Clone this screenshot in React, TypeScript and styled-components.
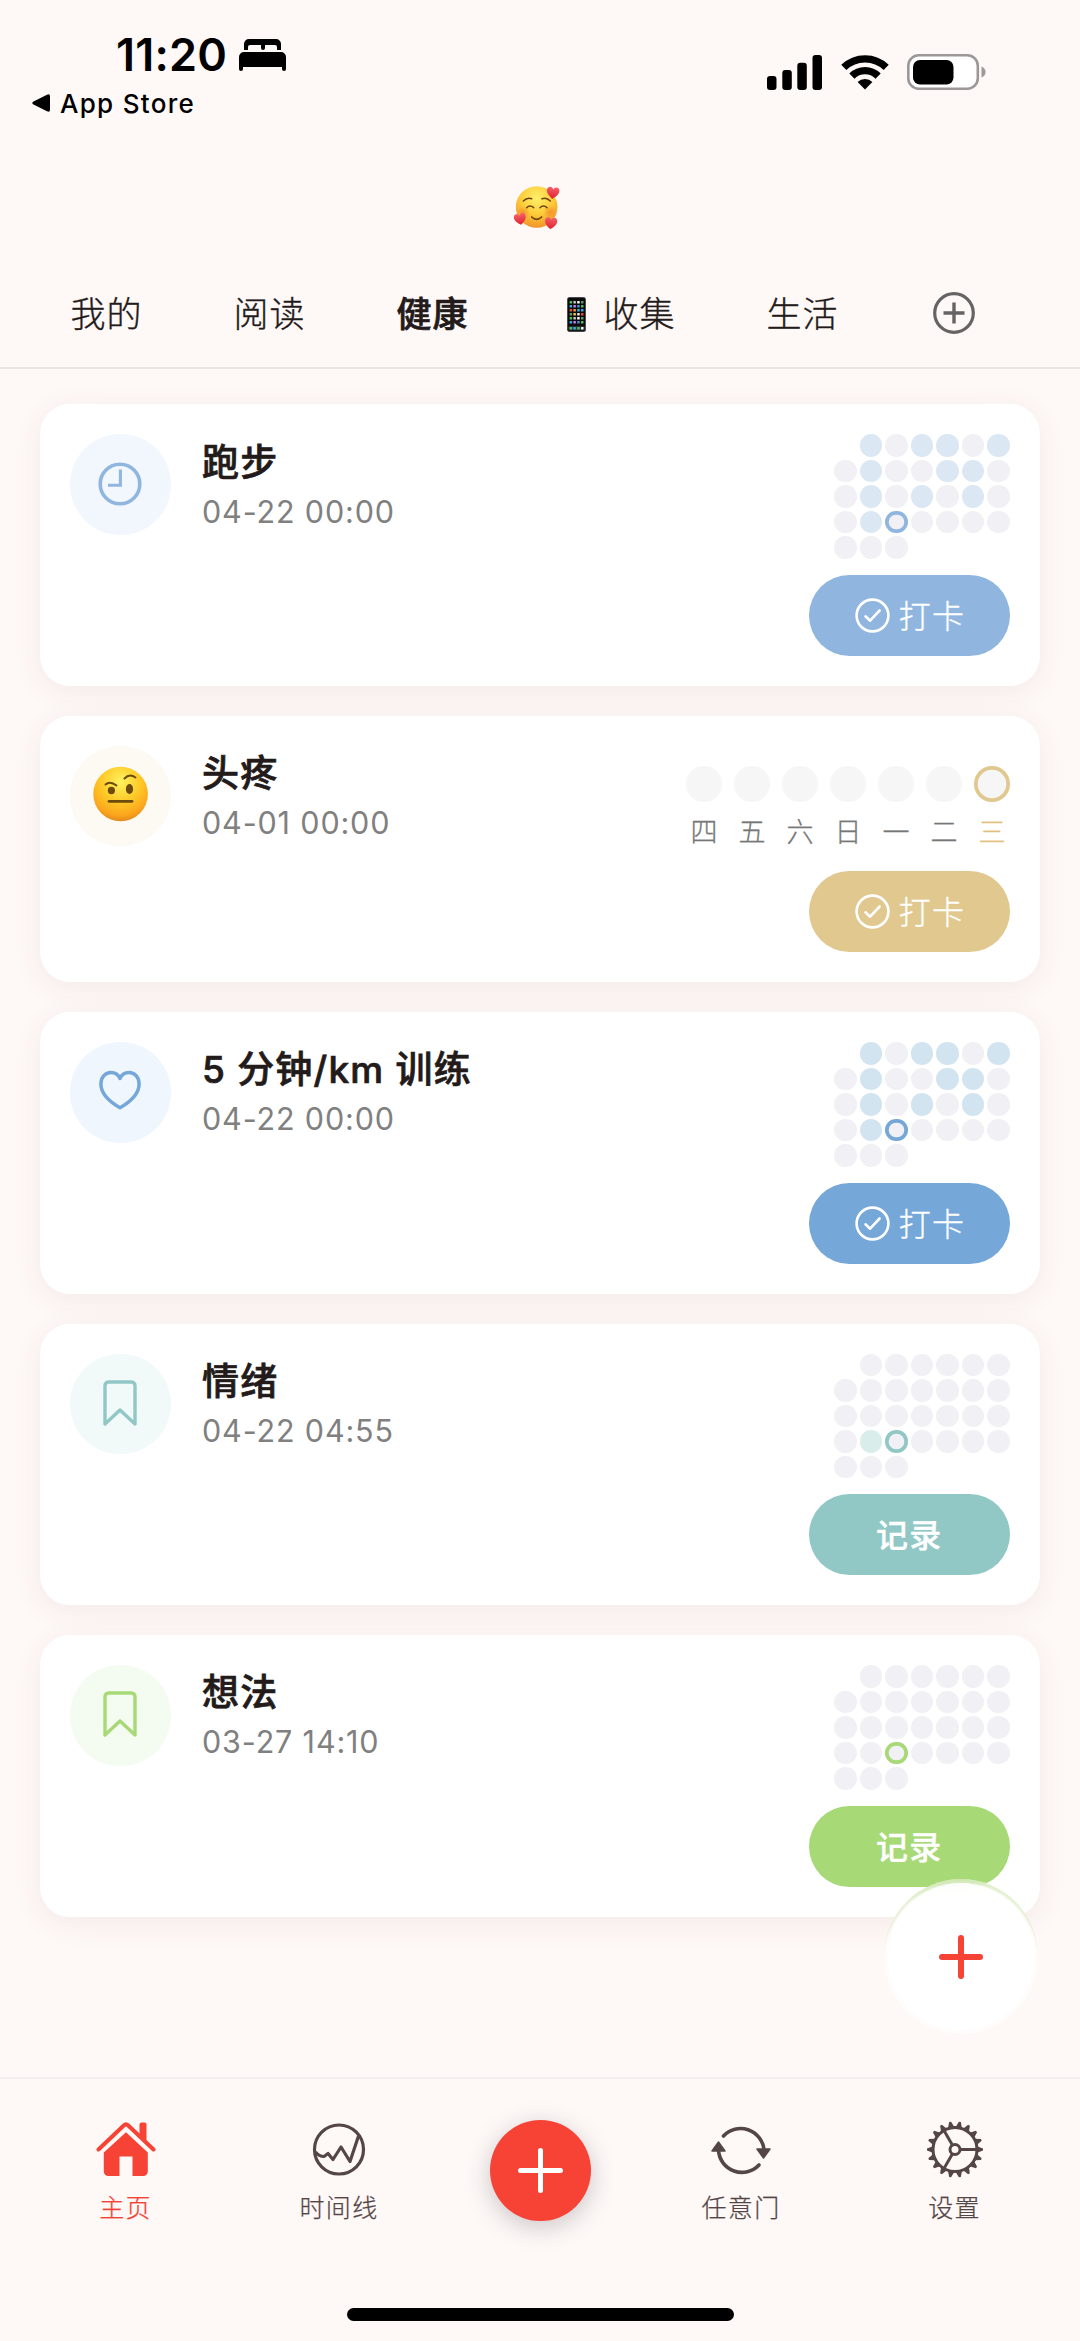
import React from "react";
import styled, { createGlobalStyle } from "styled-components";

const GlobalStyle = createGlobalStyle`
  * { box-sizing: border-box; }
  body { margin: 0; background: #fef8f7; }
  svg { display: block; flex: none; }
`;

const latin = `Inter, "Noto Sans CJK SC", sans-serif`;
const han = `"Noto Sans CJK SC", Inter, sans-serif`;

const Screen = styled.div`
  width: 1080px;
  height: 2341px;
  display: flex;
  flex-direction: column;
  background: #fef8f7;
  color: #231a1a;
  font-family: ${han};
  overflow: hidden;
`;

/* ---------- status bar ---------- */

const StatusBar = styled.div`
  height: 130px;
  flex: none;
  display: flex;
  justify-content: space-between;
  padding: 30px 93px 0 32px;
  color: #000;
  font-family: ${latin};
`;

const StatusLeft = styled.div`
  display: flex;
  flex-direction: column;
`;

const Clock = styled.div`
  display: flex;
  align-items: center;
  gap: 12px;
  height: 49px;
  padding-left: 84px;
  font-size: 45px;
  font-weight: 600;
  line-height: 49px;
  letter-spacing: 0.2px;
`;

const BackLink = styled.div`
  display: flex;
  align-items: center;
  gap: 10px;
  height: 48px;
  font-size: 26px;
  font-weight: 500;
  letter-spacing: 1.3px;
`;

const StatusRight = styled.div`
  display: flex;
  align-items: center;
  height: 40px;
  margin-top: 22px;
  gap: 18px;
`;

/* ---------- header and tabs ---------- */

const Header = styled.header`
  height: 130px;
  flex: none;
  display: flex;
  justify-content: center;
  padding: 56px 6px 0 0;
`;

const Tabs = styled.nav`
  height: 109px;
  flex: none;
  display: flex;
  align-items: center;
  gap: 91px;
  padding: 0 0 0 70.5px;
  border-bottom: 2px solid #eae5e5;
`;

const Tab = styled.div<{ $active?: boolean }>`
  display: flex;
  align-items: center;
  gap: 17.5px;
  margin-top: -4px;
  font-size: 35px;
  line-height: 50px;
  letter-spacing: 1px;
  font-weight: ${(p) => (p.$active ? 500 : 300)};
  -webkit-text-stroke: ${(p) => (p.$active ? "0.7px" : "0.35px")} currentColor;

  svg {
    margin: 5px 0 0 7.5px;
  }
`;

const AddTab = styled.div`
  margin: -1px 0 0 3px;
`;

/* ---------- card list ---------- */

const List = styled.main`
  position: relative;
  flex: 1;
  min-height: 0;
  overflow: hidden;
  display: flex;
  flex-direction: column;
  gap: 30px;
  padding: 35.4px 40px 0;
`;

const Card = styled.section`
  display: flex;
  align-items: flex-start;
  padding: 30px;
  border-radius: 30px;
  background: #fff;
  box-shadow: 0 6px 30px rgba(95, 60, 38, 0.07);
`;

const Badge = styled.div<{ $tint: string }>`
  width: 100.5px;
  height: 100.5px;
  flex: none;
  display: flex;
  align-items: center;
  justify-content: center;
  border-radius: 50%;
  background: ${(p) => p.$tint};
`;

const Info = styled.div`
  flex: 1;
  padding: 3.4px 0 0 31.5px;
`;

const Name = styled.h2`
  margin: 0;
  font-family: ${latin};
  font-size: 37px;
  line-height: 50px;
  font-weight: 500;
  letter-spacing: 1.2px;
  -webkit-text-stroke: 0.7px currentColor;
`;

const When = styled.div`
  font-family: ${latin};
  font-size: 30.5px;
  line-height: 48px;
  letter-spacing: 0.85px;
  color: #808080;
`;

const Side = styled.div`
  display: flex;
  flex-direction: column;
  align-items: flex-end;
`;

const Month = styled.div`
  display: grid;
  grid-template-columns: repeat(7, 22.5px);
  grid-auto-rows: 22.5px;
  gap: 3px;
  margin: 0 0.5px 16.4px 0;
`;

const Day = styled.i<{ $fill: string; $ring?: string }>`
  border-radius: 50%;
  background: ${(p) => p.$fill};
  box-shadow: ${(p) => (p.$ring ? `inset 0 0 0 3.7px ${p.$ring}` : "none")};
`;

const Week = styled.div`
  display: flex;
  gap: 12px;
  padding-top: 19.7px;
  margin-bottom: 21.9px;
`;

const WeekDay = styled.div<{ $color: string }>`
  width: 36px;
  display: flex;
  flex-direction: column;
  align-items: center;
  font-size: 27px;
  font-weight: 300;
  line-height: 38px;
  color: ${(p) => p.$color};
  -webkit-text-stroke: 0.3px currentColor;
`;

const WeekDot = styled.i<{ $ring?: string }>`
  width: 36px;
  height: 36px;
  margin-bottom: 10px;
  border-radius: 50%;
  background: #f6f6f7;
  box-shadow: ${(p) => (p.$ring ? `inset 0 0 0 3.7px ${p.$ring}` : "none")};
`;

const Action = styled.button<{ $color: string; $strong: boolean }>`
  width: 201.5px;
  height: 80.6px;
  display: flex;
  align-items: center;
  justify-content: center;
  gap: 8.5px;
  padding: 0 0 3px ${(p) => (p.$strong ? "0" : "2px")};
  border: 0;
  border-radius: 41px;
  background: ${(p) => p.$color};
  color: #fff;
  font-family: ${han};
  font-size: 32px;
  font-weight: ${(p) => (p.$strong ? 500 : 300)};
  line-height: 48px;
  letter-spacing: 1.2px;
  -webkit-text-stroke: 0.35px currentColor;

  svg {
    margin-top: 3px;
  }
`;

/* ---------- floating add button ---------- */

const Floating = styled.button`
  position: absolute;
  right: 42px;
  bottom: 43px;
  width: 154px;
  height: 155px;
  padding: 4px;
  border: 0;
  border-radius: 50%;
  background: rgba(255, 255, 255, 0.62);
  backdrop-filter: blur(8px);
  box-shadow: inset 0 5px 2px -1px rgba(178, 214, 130, 0.36);
`;

const FloatingFace = styled.span`
  width: 100%;
  height: 100%;
  display: flex;
  align-items: center;
  justify-content: center;
  border-radius: 50%;
  background: rgba(255, 255, 255, 0.88);
`;

/* ---------- bottom bar ---------- */

const BottomBar = styled.footer`
  height: 264px;
  flex: none;
  display: flex;
  flex-direction: column;
  align-items: center;
  justify-content: space-between;
  border-top: 2px solid #f4eeee;
  padding-bottom: 20px;
`;

const NavRow = styled.div`
  display: grid;
  grid-template-columns: 214px 213px 189px 213px 214px;
  padding-top: 41px;
`;

const NavItem = styled.div<{ $active?: boolean }>`
  display: flex;
  flex-direction: column;
  align-items: center;
  gap: 10px;
  color: ${(p) => (p.$active ? "#f44336" : "#544646")};
  font-size: 25px;
  font-weight: 300;
  line-height: 36px;
  letter-spacing: 1.3px;
  -webkit-text-stroke: 0.25px currentColor;
`;

const AddButton = styled.button`
  width: 101px;
  height: 101px;
  display: flex;
  align-items: center;
  justify-content: center;
  justify-self: center;
  padding: 0;
  border: 0;
  border-radius: 50%;
  background: #f64335;
  box-shadow: 0 6px 24px rgba(60, 50, 60, 0.25);
`;

const HomeIndicator = styled.div`
  width: 387px;
  height: 13px;
  border-radius: 7px;
  background: #000;
`;

/* ---------- icons ---------- */

const Bed = () => (
  <svg width="47" height="32" viewBox="0 0 47 32">
    <path d="M5 11V5a5 5 0 0 1 5-5h27a5 5 0 0 1 5 5v6h-4V8a2 2 0 0 0-2-2H26v3a2 2 0 0 1-4 0V6H11a2 2 0 0 0-2 2v3z" />
    <path d="M0 30V18a5 5 0 0 1 5-5h37a5 5 0 0 1 5 5v12a2 2 0 0 1-4 0v-2H4v2a2 2 0 0 1-4 0z" />
  </svg>
);

const BackArrow = () => (
  <svg width="18" height="18" viewBox="0 0 18 18">
    <path d="M1.5 7.5 15 .7q3-1.2 3 1.5v13.6q0 2.700-3 1.500L1.500 10.500q-2.500-1.500 0-3z" />
  </svg>
);

const Signal = () => (
  <svg width="56" height="35" viewBox="0 0 56 35">
    <rect x="0" y="21" width="9.500" height="14" rx="3" />
    <rect x="15.300" y="15" width="9.500" height="20" rx="3" />
    <rect x="30.300" y="7.700" width="9.500" height="27.300" rx="3" />
    <rect x="45.500" y="0" width="9.500" height="35" rx="3" />
  </svg>
);

const Wifi = () => (
  <svg width="48" height="36" viewBox="0 0 48 36">
    <g fill="none" stroke="#000" strokeWidth="7.300">
      <path d="M2.800 13.400A30.400 30.400 0 0 1 45.200 13.400" />
      <path d="M10.900 22.100A18.500 18.500 0 0 1 37.100 22.100" />
    </g>
    <path d="M24 35.500 16.600 28a10.500 10.500 0 0 1 14.800 0z" />
  </svg>
);

const Battery = () => (
  <svg width="80" height="36" viewBox="0 0 80 36">
    <rect x="1.300" y="1.300" width="69.500" height="33.400" rx="10.500" fill="#fff" stroke="#9c9898" strokeWidth="2.600" />
    <rect x="6" y="6" width="40.500" height="24.500" rx="7" />
    <path d="M74.500 12.500q4 1.500 4 5.500t-4 5.500z" fill="#9c9898" />
  </svg>
);

const HEART = "M0-8C-3-17-16-17-17-6-18 4-8 12 0 18 8 12 18 4 17-6 16-17 3-17 0-8z";

const LoveFace = () => (
  <svg width="45.300" height="43.700" viewBox="27 32 136 131">
    <defs>
      <radialGradient id="loveSkin" cx="50%" cy="28%" r="72%">
        <stop offset="0" stopColor="#fff06a" />
        <stop offset=".55" stopColor="#fdcb38" />
        <stop offset="1" stopColor="#f0932a" />
      </radialGradient>
      <linearGradient id="loveHeart" x1="0" y1="0" x2="0" y2="1">
        <stop offset="0" stopColor="#f4606a" />
        <stop offset="1" stopColor="#e0202c" />
      </linearGradient>
      <radialGradient id="loveBlush">
        <stop offset="0" stopColor="#f58a2a" stopOpacity=".8" />
        <stop offset="1" stopColor="#f58a2a" stopOpacity="0" />
      </radialGradient>
    </defs>
    <circle cx="95" cy="95" r="62.500" fill="url(#loveSkin)" />
    <circle cx="54" cy="112" r="21" fill="url(#loveBlush)" />
    <circle cx="136" cy="110" r="21" fill="url(#loveBlush)" />
    <g fill="none" stroke="#6b4310" strokeWidth="4.500" strokeLinecap="round">
      <path d="M55 77q11-12 25-7M111 70q14-5 25 7" />
      <path d="M65 97q10-10 21 0M105 97q10-10 21 0" />
      <path d="M80 125q15 14 30 0" strokeWidth="5" />
    </g>
    <g fill="url(#loveHeart)">
      <path transform="translate(144 51) rotate(6) scale(1.100)" d={HEART} />
      <path transform="translate(45 130) rotate(-10) scale(1.050)" d={HEART} />
      <path transform="translate(138 142) rotate(6) scale(1.080)" d={HEART} />
    </g>
  </svg>
);

const APP_COLORS = ["#43c95a", "#e8e8e8", "#d07be0", "#5a9e6a", "#39b4ea", "#c8c8c8", "#e8503a", "#4a8fd8", "#f2c53a", "#35b0e8", "#fff", "#f29a3a"];

const PhoneEmoji = () => (
  <svg width="19" height="35" viewBox="0 0 19 35">
    <rect x=".3" y=".3" width="18.400" height="34.400" rx="2.500" fill="#0b0b0d" stroke="#4b4b50" strokeWidth=".6" />
    {Array.from({ length: 24 }, (_, i) => (
      <rect
        key={i}
        x={2.6 + (i % 4) * 3.8}
        y={4 + Math.floor(i / 4) * 4}
        width="2.500"
        height="2.500"
        rx=".5"
        fill={APP_COLORS[(i * 5 + Math.floor(i / 4)) % 12]}
      />
    ))}
    <rect x="1.300" y="29.300" width="16.400" height="4" rx="1" fill="#34363a" />
    {["#43c95a", "#39a4ea", "#43c95a", "#f4f4f4"].map((c, i) => (
      <rect key={i} x={2.6 + i * 3.8} y="30" width="2.500" height="2.500" rx=".5" fill={c} />
    ))}
  </svg>
);

const CirclePlus = () => (
  <svg width="42" height="42" viewBox="0 0 42 42" fill="none" stroke="#666364" strokeWidth="3.200">
    <circle cx="21" cy="21" r="19.300" />
    <path d="M21 10.500v21M10.500 21h21" strokeWidth="3.400" />
  </svg>
);

const ClockIcon = () => (
  <svg width="44" height="48" viewBox="0 0 44 48" fill="none" stroke="#90b6e0">
    <circle cx="22" cy="23" r="19.800" strokeWidth="3.600" />
    <path d="M22.400 8.500v15.700H10" strokeWidth="3.100" />
  </svg>
);

const HeartIcon = () => (
  <svg width="44" height="46" viewBox="0 0 44 46" fill="none" stroke="#75a7d9" strokeWidth="3.500" strokeLinejoin="round">
    <path d="M22 38.800C12 33 2.900 24.500 2.900 15 2.900 8 7.500 3.500 13 3.500c4.500 0 7.500 2.500 9 6 1.500-3.500 4.500-6 9-6 5.500 0 10.100 4.500 10.100 11.500C41.100 24.500 32 33 22 38.800z" />
  </svg>
);

const BookmarkIcon = ({ color }: { color: string }) => (
  <svg width="34" height="48" viewBox="0 0 34 48" fill="none" stroke={color} strokeWidth="3.400" strokeLinejoin="round">
    <path d="M2 44V5.500a3.500 3.500 0 0 1 3.500-3.500h23a3.500 3.500 0 0 1 3.500 3.500V44L17 30z" />
  </svg>
);

const RaisedBrowFace = () => (
  <svg width="56" height="60" viewBox="0 0 56 60">
    <defs>
      <radialGradient id="browSkin" cx="50%" cy="28%" r="72%">
        <stop offset="0" stopColor="#fff25f" />
        <stop offset=".5" stopColor="#fec927" />
        <stop offset=".85" stopColor="#fba51c" />
        <stop offset="1" stopColor="#e28a1e" />
      </radialGradient>
    </defs>
    <circle cx="28.600" cy="28" r="27.300" fill="url(#browSkin)" />
    <ellipse cx="19.400" cy="24.500" rx="3.600" ry="3.700" fill="#6b4a0c" />
    <ellipse cx="37.500" cy="23" rx="3.600" ry="5" fill="#6b4a0c" />
    <g fill="none" stroke="#6b4a0c" strokeLinecap="round">
      <path d="M13.500 18.500q4.500-4 11 1M32.500 12.500q5-5.500 11-1" strokeWidth="2" />
      <path d="M17 35.300h23" strokeWidth="2.800" />
    </g>
  </svg>
);

const CheckCircle = () => (
  <svg width="35" height="35" viewBox="0 0 35 35" fill="none" stroke="#fff" strokeWidth="2.600" strokeLinecap="round" strokeLinejoin="round">
    <circle cx="17.500" cy="17.500" r="15.900" />
    <path d="M10.500 18.300l4.600 4.400 9.500-10.200" />
  </svg>
);

const Plus = ({ size, color, weight }: { size: number; color: string; weight: number }) => (
  <svg width={size} height={size} viewBox={`0 0 ${size} ${size}`} stroke={color} strokeWidth={weight} strokeLinecap="round">
    <path d={`M${size / 2} ${weight / 2}V${size - weight / 2}M${weight / 2} ${size / 2}H${size - weight / 2}`} />
  </svg>
);

const HomeIcon = () => (
  <svg width="60" height="58" viewBox="0.500 0 60 58">
    <path d="M8.300 32.500 30.500 12.300 52.300 32.500V51.500a4.500 4.500 0 0 1-4.500 4.500H37V36.500H24V56H12.800a4.500 4.500 0 0 1-4.500-4.500z" fill="#f64335" />
    <path d="M44 4.500q0-2 2-2h3q2 0 2 2v18l-7-7z" fill="#f64335" />
    <path d="M3 29.500 28.500 5.300q2-1.800 4 0L58 29.500" fill="none" stroke="#f64335" strokeWidth="4" strokeLinecap="round" />
  </svg>
);

const TimelineIcon = () => (
  <svg width="56" height="58" viewBox="0 0 56 58" fill="none" stroke="#544646" strokeWidth="3.200" strokeLinejoin="round">
    <circle cx="28" cy="29.500" r="24.500" />
    <path d="M4.500 32q3.500 4.500 8.500 4.500l4-3 5 6 8-12.500 9 14.500 8.500-25.500" />
  </svg>
);

const CycleIcon = () => (
  <svg width="60" height="58" viewBox="0 0 60 58" fill="none" stroke="#544646" strokeWidth="3.600">
    <path d="M12.500 16A23.500 23.500 0 0 1 53 29.500" strokeLinecap="round" />
    <path d="M48 45A23.500 23.500 0 0 1 7.500 30.500" strokeLinecap="round" />
    <path d="M46 29h13l-6.500 9zM1 31h13l-6.500-9z" fill="#544646" strokeWidth="1.500" strokeLinejoin="round" />
  </svg>
);

const GearIcon = () => (
  <svg width="58" height="58" viewBox="-29 -29.500 58 58" fill="none" stroke="#544646" strokeWidth="3">
    <circle r="22" />
    <circle r="5" />
    {Array.from({ length: 18 }, (_, i) => (
      <path key={i} transform={`rotate(${i * 20})`} d="M22-3.300 28-1v2l-6 2.300z" fill="#544646" stroke="none" />
    ))}
    {[0, 120, 240].map((a) => (
      <path key={a} transform={`rotate(${a})`} d="M5 0h17" />
    ))}
  </svg>
);

/* ---------- data ---------- */

type Habit = {
  name: string;
  when: string;
  icon: React.ReactNode;
  color: string;
  tint: string;
  mark?: string;
  marked?: number[];
  view: "month" | "week";
  action: "打卡" | "记录";
};

const EMPTY_DAY = "#f1f1f5";
const TODAY = 23;
const RUN_DAYS = [1, 3, 4, 6, 8, 11, 12, 15, 17, 19, 22];

const HABITS: Habit[] = [
  { name: "跑步", when: "04-22 00:00", icon: <ClockIcon />, color: "#90b6e0", tint: "#f1f7fd", mark: "#dbe8f4", marked: RUN_DAYS, view: "month", action: "打卡" },
  { name: "头疼", when: "04-01 00:00", icon: <RaisedBrowFace />, color: "#e0c88f", tint: "#fdfaf3", view: "week", action: "打卡" },
  { name: "5 分钟/km 训练", when: "04-22 00:00", icon: <HeartIcon />, color: "#75a7d9", tint: "#eff6fd", mark: "#d3e4f1", marked: RUN_DAYS, view: "month", action: "打卡" },
  { name: "情绪", when: "04-22 04:55", icon: <BookmarkIcon color="#91c8c6" />, color: "#91c8c6", tint: "#f1f9f9", mark: "#d9eeea", marked: [22], view: "month", action: "记录" },
  { name: "想法", when: "03-27 14:10", icon: <BookmarkIcon color="#a7d976" />, color: "#a7d976", tint: "#f4fbf0", marked: [], view: "month", action: "记录" },
];

const WEEK = ["四", "五", "六", "日", "一", "二", "三"];

/* The first cell stays empty: the month begins in the second column. */
const MonthView = ({ habit }: { habit: Habit }) => (
  <Month>
    {Array.from({ length: 31 }, (_, cell) => {
      if (cell === 0) return <span key={cell} />;
      const marked = habit.marked?.includes(cell);
      return (
        <Day
          key={cell}
          $fill={marked ? habit.mark ?? EMPTY_DAY : EMPTY_DAY}
          $ring={cell === TODAY ? habit.color : undefined}
        />
      );
    })}
  </Month>
);

const WeekView = ({ color }: { color: string }) => (
  <Week>
    {WEEK.map((d, i) => (
      <WeekDay key={d} $color={i === 6 ? "#e3c080" : "#777"}>
        <WeekDot $ring={i === 6 ? color : undefined} />
        {d}
      </WeekDay>
    ))}
  </Week>
);

export default function App() {
  return (
    <>
      <GlobalStyle />
      <Screen>
        <StatusBar>
          <StatusLeft>
            <Clock>
              11:20
              <Bed />
            </Clock>
            <BackLink>
              <BackArrow />
              App Store
            </BackLink>
          </StatusLeft>
          <StatusRight>
            <Signal />
            <Wifi />
            <Battery />
          </StatusRight>
        </StatusBar>

        <Header>
          <LoveFace />
        </Header>

        <Tabs>
          <Tab>我的</Tab>
          <Tab>阅读</Tab>
          <Tab $active>健康</Tab>
          <Tab>
            <PhoneEmoji />
            收集
          </Tab>
          <Tab>生活</Tab>
          <AddTab>
            <CirclePlus />
          </AddTab>
        </Tabs>

        <List>
          {HABITS.map((h) => (
            <Card key={h.name}>
              <Badge $tint={h.tint}>{h.icon}</Badge>
              <Info>
                <Name>{h.name}</Name>
                <When>{h.when}</When>
              </Info>
              <Side>
                {h.view === "month" ? <MonthView habit={h} /> : <WeekView color={h.color} />}
                <Action $color={h.color} $strong={h.action === "记录"}>
                  {h.action === "打卡" && <CheckCircle />}
                  {h.action}
                </Action>
              </Side>
            </Card>
          ))}
          <Floating>
            <FloatingFace>
              <Plus size={44} color="#f64335" weight={6} />
            </FloatingFace>
          </Floating>
        </List>

        <BottomBar>
          <NavRow>
            <NavItem $active>
              <HomeIcon />
              主页
            </NavItem>
            <NavItem>
              <TimelineIcon />
              时间线
            </NavItem>
            <AddButton>
              <Plus size={45} color="#fff" weight={5} />
            </AddButton>
            <NavItem>
              <CycleIcon />
              任意门
            </NavItem>
            <NavItem>
              <GearIcon />
              设置
            </NavItem>
          </NavRow>
          <HomeIndicator />
        </BottomBar>
      </Screen>
    </>
  );
}
